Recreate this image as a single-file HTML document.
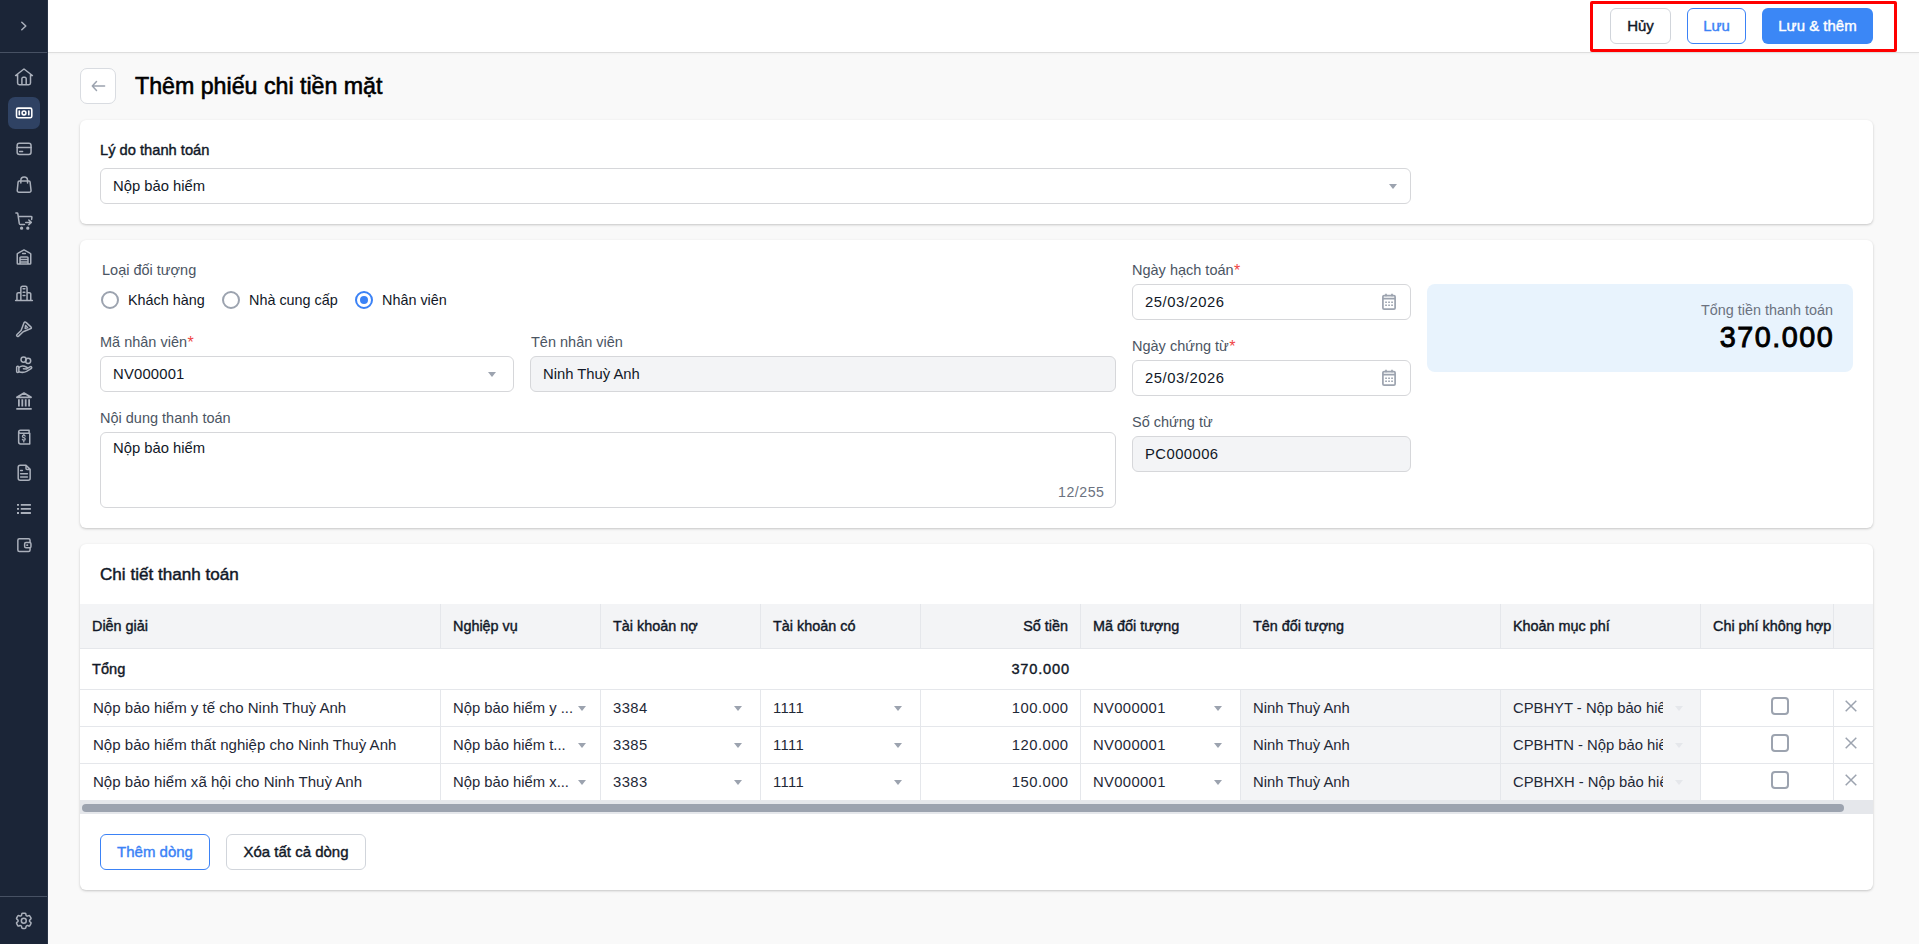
<!DOCTYPE html>
<html lang="vi">
<head>
<meta charset="utf-8">
<title>Thêm phiếu chi tiền mặt</title>
<style>
*{box-sizing:border-box;margin:0;padding:0}
html,body{width:1919px;height:944px;overflow:hidden;background:#f9f9f9;font-family:"Liberation Sans",sans-serif;color:#111827}
.abs{position:absolute}
#side{position:absolute;left:0;top:0;width:48px;height:944px;background:#1b2537;border-right:1px solid #2a3547}
#side .sep{position:absolute;left:0;width:47px;height:1px;background:#475163}
#side svg{position:absolute;left:12px;width:24px;height:24px;fill:none;stroke:#aab0bb;stroke-width:1.5;stroke-linecap:round;stroke-linejoin:round}
#side .act{position:absolute;left:8px;top:97px;width:32px;height:32px;border-radius:7px;background:#2f4263}
#hdr{position:absolute;left:48px;top:0;width:1871px;height:53px;background:#fff;border-bottom:1px solid #dedede;box-shadow:0 1px 2px rgba(0,0,0,.03)}
.btn{position:absolute;height:36px;border-radius:6px;font-weight:normal;font-size:15px;-webkit-text-stroke:.4px currentColor;display:flex;align-items:center;justify-content:center;background:#fff;padding-bottom:2px}
.card{position:absolute;left:80px;width:1793px;background:#fff;border-radius:6px;box-shadow:0 1px 3px rgba(0,0,0,.16),0 1px 2px rgba(0,0,0,.06)}
.lbl{position:absolute;font-size:14.5px;color:#4b5563;line-height:16px;white-space:nowrap}
.lbl b{color:#ef4444;font-weight:normal;font-size:16px;margin-left:.5px;position:relative;top:.5px}
.inp{position:absolute;height:36px;border:1px solid #d6d7da;border-radius:6px;background:#fff;font-size:14.8px;color:#111827;display:flex;align-items:center;padding-left:12px;white-space:nowrap}
.inp.dis{background:#f3f4f6}
.caret{position:absolute;width:0;height:0;border-left:4px solid transparent;border-right:4px solid transparent;border-top:5px solid #9ca3af}
.radio{position:absolute;width:18px;height:18px;border-radius:50%;border:2px solid #9ca3af;background:#fff}
.radio.on{border-color:#3b82f6}
.radio.on:after{content:"";position:absolute;left:3px;top:3px;width:8px;height:8px;border-radius:50%;background:#3b82f6}
.rtxt{position:absolute;font-size:14.4px;line-height:16px;color:#111827;white-space:nowrap}
svg.cal{position:absolute;width:14px;height:17px;fill:none;stroke:#9ca3af;stroke-width:1.7}
svg.cal .dots{stroke-width:1.6;stroke-linecap:square}
#tbl{position:absolute;left:80px;top:604px;width:1793px;height:210px;overflow:hidden}
.tr{display:flex;height:37px;border-bottom:1px solid #e5e7eb;position:relative}
.tr.th{height:45px;background:#f3f4f6}
.tr.tong{height:41px}
.row .td:first-child{padding-left:13px;font-size:15.05px;padding-bottom:2px}
.td{position:relative;flex:none;height:100%;border-left:1px solid #e5e7eb;padding:0 12px;display:flex;align-items:center;font-size:14.8px;color:#1f2937;white-space:nowrap;overflow:hidden}
.td:first-child{border-left:none}
.th .td{font-size:14.4px;-webkit-text-stroke:.4px currentColor;color:#111827}
.tong .td{font-size:14.6px;-webkit-text-stroke:.4px currentColor;color:#111827}
.td.nb{border-left-color:transparent}
.td.r{justify-content:flex-end}
.td.g{background:#f3f4f6}
.td .caret{top:16px}
.td .caret.lt{border-top-color:#e5e7eb}
.tx2{display:block;width:150px;overflow:hidden}
.cb{position:absolute;left:70px;top:7px;width:18px;height:18px;border:2px solid #9ca3af;border-radius:4px}
svg.x{position:absolute;left:11px;top:10px;width:12px;height:12px;stroke:#9ca3af;stroke-width:1.5;fill:none}
#track{position:absolute;left:0;top:196px;width:1793px;height:14px;background:#e5e7eb}
#thumb{position:absolute;left:2px;top:4px;width:1762px;height:8px;border-radius:4px;background:#9ca3af}
</style>
</head>
<body>
<!-- SIDEBAR -->
<div id="side">
  <div class="sep" style="top:52px"></div>
  <div class="act"></div>
  <div class="sep" style="top:896px"></div>
  <svg style="top:14px" viewBox="0 0 24 24"><path d="M9.8 8.2L13.8 12L9.8 15.8"/></svg>
  <svg style="top:64.5px" viewBox="0 0 24 24"><path d="M5.6 10.5H3.6L12 4L20.4 10.5H18.5M5.6 9.2V18.1a1.7 1.7 0 0 0 1.7 1.7H16.8a1.7 1.7 0 0 0 1.7-1.7V9.2M9.9 19.8V13.6a1.3 1.3 0 0 1 1.3-1.3h1.7a1.3 1.3 0 0 1 1.3 1.3V19.8"/></svg>
  <svg style="top:101px" viewBox="0 0 24 24"><g style="stroke:#fff;stroke-width:1.55"><rect x="4.5" y="7.1" width="15.3" height="9.7" rx="1.6"/><path d="M7.3 10.1V13.8M16.8 10.1V13.8"/><circle cx="12" cy="11.95" r="1.9"/></g></svg>
  <svg style="top:137px" viewBox="0 0 24 24"><rect x="5.15" y="6.35" width="13.9" height="11.2" rx="2.2"/><path d="M5.15 10.5H19.05M7.6 14.5H10.6"/></svg>
  <svg style="top:173px" viewBox="0 0 24 24"><path d="M8.85 9.9V7.4a3.35 3.35 0 0 1 6.7 0V9.9"/><path d="M7.3 7.95H16.9a1.2 1.2 0 0 1 1.2 1.1L19.05 17.5a1.7 1.7 0 0 1-1.7 1.75H6.95a1.7 1.7 0 0 1-1.7-1.75L6.1 9.05a1.2 1.2 0 0 1 1.2-1.1Z"/></svg>
  <svg style="top:209px" viewBox="0 0 24 24"><path d="M3.9 3.9h1.1a0.8 0.8 0 0 1 0.8 0.7L7.3 14.7a1 1 0 0 0 1 0.8H12.5M6.7 7.5H19.3a0.6 0.6 0 0 1 0.6 0.7L19.6 10.4M13.7 13.4H19.3M16.8 11L19.3 13.4L16.8 15.8"/><circle cx="9.6" cy="19.2" r="0.9" style="fill:#aab0bb"/><circle cx="15.8" cy="19.2" r="0.9" style="fill:#aab0bb"/></svg>
  <svg style="top:245px" viewBox="0 0 24 24"><path d="M5.25 18.2V9a0.8 0.8 0 0 1 0.45-0.7L12 4.9L18.3 8.3a0.8 0.8 0 0 1 0.45 0.7V18.2a0.8 0.8 0 0 1-0.8 0.8H6.05a0.8 0.8 0 0 1-0.8-0.8ZM10.6 8.5H13.4M8 19V13a0.9 0.9 0 0 1 0.9-0.9H15.1a0.9 0.9 0 0 1 0.9 0.9V19M8 14.6H16M8 16.9H16"/></svg>
  <svg style="top:281px" viewBox="0 0 24 24"><path d="M3.6 19.6H20.4M8.85 19.6V6.9a1.7 1.7 0 0 1 1.7-1.7h2.8a1.7 1.7 0 0 1 1.7 1.7V19.6M4.95 19.6V13.1a1.4 1.4 0 0 1 1.4-1.4H8.85M15.05 11.7h2.3a1.4 1.4 0 0 1 1.4 1.4V19.6M11.1 7.8h1.8M11.1 11.2h1.8M11.1 14.5h1.8"/></svg>
  <svg style="top:317px" viewBox="0 0 24 24"><path d="M11.9 5.9Q12.9 4.4 14.3 5.6L19.1 10.1Q19.8 11 18.9 11.5L11.2 14.7L6.6 19.1Q5.6 19.9 4.9 19.1Q4.2 18.3 5 17.5L9.1 13.5Z"/><path d="M13.5 8.3L15.7 10.7L13.1 11.6Z" style="stroke-width:1.3"/></svg>
  <svg style="top:353px" viewBox="0 0 24 24"><circle cx="11.6" cy="6.6" r="2.6"/><circle cx="16.1" cy="7.8" r="2.6"/><rect x="4.65" y="13.25" width="2.2" height="6.3" rx="1"/><path d="M6.9 14.5C8.4 13.2 10.8 12.6 12.6 13.3L14.7 14.2a0.9 0.9 0 0 1-0.5 1.7L11.4 15.7M6.9 18.7C9.4 19.6 12.4 19.5 14.6 18.4L19.5 15.3a1 1 0 0 0-1.1-1.6L15 15.6"/></svg>
  <svg style="top:389px" viewBox="0 0 24 24"><path d="M4.9 8.3L12 4.1L19.1 8.3Z" style="stroke-width:1.7"/><path d="M6.9 10.3V17.5M10.3 10.3V17.5M13.7 10.3V17.5M17.1 10.3V17.5M4.3 19.8H19.7" style="stroke-width:1.8;stroke-linecap:butt"/></svg>
  <svg style="top:425px" viewBox="0 0 24 24"><path d="M6.65 7a1.85 1.85 0 0 1 1.85-1.85H17.1V8.2M6.65 7V17.1a1.85 1.85 0 0 0 1.85 1.85H17.75V8.2H8.5a1.85 1.85 0 0 1-1.85-1.2"/><path d="M13.1 11.1c-0.2-0.6-0.7-0.9-1.3-0.9c-0.8 0-1.4 0.5-1.4 1.2c0 1.6 2.8 1 2.8 2.6c0 0.7-0.6 1.2-1.4 1.2c-0.6 0-1.2-0.3-1.4-0.9M11.8 9.3v0.9M11.8 16v0.9" style="stroke-width:1.3"/></svg>
  <svg style="top:461px" viewBox="0 0 24 24"><path d="M14 4.25H8.2a2 2 0 0 0-2 2V17.35a2 2 0 0 0 2 2H16.15a2 2 0 0 0 2-2V8.4ZM14 4.25V7.4a1 1 0 0 0 1 1H18.15M8.6 9.4H10.4M8.6 12.8H15.4M8.6 16.1H15.4"/></svg>
  <svg style="top:497px" viewBox="0 0 24 24"><path d="M5 7.9h2M5 11.9h2M5 15.95h2M8.8 7.9H18.9M8.8 11.9H18.9M8.8 15.95H18.9" style="stroke-width:1.9;stroke-linecap:butt"/></svg>
  <svg style="top:533px" viewBox="0 0 24 24"><path d="M18.05 9.55V7.35a1.5 1.5 0 0 0-1.5-1.5H7.35a1.5 1.5 0 0 0-1.5 1.5V16.95a1.5 1.5 0 0 0 1.5 1.5h9.2a1.5 1.5 0 0 0 1.5-1.5V14.75"/><rect x="12.65" y="9.55" width="6.3" height="5.2" rx="1.3"/><path d="M15.1 12.15h0.2" style="stroke-width:1.9"/></svg>
  <svg style="top:909px" viewBox="0 0 24 24"><g transform="translate(11.8 11.8) scale(0.845) translate(-12 -12)" style="stroke-width:1.8"><path d="M9.594 3.94c.09-.542.56-.94 1.11-.94h2.593c.55 0 1.02.398 1.11.94l.213 1.281c.063.374.313.686.645.87.074.04.147.083.22.127.325.196.72.257 1.075.124l1.217-.456a1.125 1.125 0 0 1 1.37.49l1.296 2.247a1.125 1.125 0 0 1-.26 1.431l-1.003.827c-.293.241-.438.613-.43.992a7.723 7.723 0 0 1 0 .255c-.008.378.137.75.43.991l1.004.827c.424.35.534.955.26 1.43l-1.298 2.247a1.125 1.125 0 0 1-1.369.491l-1.217-.456c-.355-.133-.75-.072-1.076.124a6.47 6.47 0 0 1-.22.128c-.331.183-.581.495-.644.869l-.213 1.281c-.09.543-.56.94-1.11.94h-2.594c-.55 0-1.019-.398-1.11-.94l-.213-1.281c-.062-.374-.312-.686-.644-.87a6.52 6.52 0 0 1-.22-.127c-.325-.196-.72-.257-1.076-.124l-1.217.456a1.125 1.125 0 0 1-1.369-.49l-1.297-2.247a1.125 1.125 0 0 1 .26-1.431l1.004-.827c.292-.24.437-.613.43-.991a6.932 6.932 0 0 1 0-.255c.007-.38-.138-.751-.43-.992l-1.004-.827a1.125 1.125 0 0 1-.26-1.43l1.297-2.247a1.125 1.125 0 0 1 1.37-.491l1.216.456c.356.133.751.072 1.076-.124.072-.044.146-.086.22-.128.332-.183.582-.495.644-.869l.214-1.28Z"/><circle cx="12" cy="12" r="2.9"/></g></svg>
</div>

<!-- HEADER -->
<div id="hdr"></div>
<div class="btn" style="left:1610px;top:8px;width:61px;border:1px solid #d1d5db;color:#111827">Hủy</div>
<div class="btn" style="left:1687px;top:8px;width:59px;border:1px solid #3b82f6;color:#3b82f6">Lưu</div>
<div class="btn" style="left:1762px;top:8px;width:111px;background:#3b87f6;color:#fff">Lưu &amp; thêm</div>
<div class="abs" style="left:1590px;top:1px;width:307px;height:51px;border:3px solid #ff0000;border-radius:2px"></div>

<!-- TITLE -->
<div class="abs" style="left:80px;top:68px;width:36px;height:36px;border:1px solid #d9dce1;border-radius:7px;background:#fff"></div>
<svg class="abs" style="left:86px;top:74px;width:24px;height:24px" viewBox="0 0 24 24" fill="none" stroke="#9ca3af" stroke-width="1.5" stroke-linecap="round" stroke-linejoin="round"><path d="M6.3 12H18.6M10.5 7.6L6.3 12L10.5 16.4"/></svg>
<div class="abs" style="left:135px;top:72px;font-size:23.2px;-webkit-text-stroke:.6px currentColor;line-height:28px;color:#000;white-space:nowrap">Thêm phiếu chi tiền mặt</div>

<!-- CARD 1 -->
<div class="card" style="top:120px;height:104px"></div>
<div class="abs" style="left:100px;top:142px;font-size:14.7px;-webkit-text-stroke:.4px currentColor;line-height:16px;color:#111827;white-space:nowrap">Lý do thanh toán</div>
<div class="inp" style="left:100px;top:168px;width:1311px">Nộp bảo hiểm</div>
<div class="caret" style="left:1389px;top:184px"></div>

<!-- CARD 2 -->
<div class="card" style="top:240px;height:288px"></div>
<div class="lbl" style="left:102px;top:262px">Loại đối tượng</div>
<div class="radio" style="left:101px;top:291px"></div>
<div class="rtxt" style="left:128px;top:292px">Khách hàng</div>
<div class="radio" style="left:222px;top:291px"></div>
<div class="rtxt" style="left:249px;top:292px">Nhà cung cấp</div>
<div class="radio on" style="left:355px;top:291px"></div>
<div class="rtxt" style="left:382px;top:292px">Nhân viên</div>

<div class="lbl" style="left:100px;top:334px">Mã nhân viên<b>*</b></div>
<div class="inp" style="left:100px;top:356px;width:414px;letter-spacing:.2px">NV000001</div>
<div class="caret" style="left:488px;top:372px"></div>
<div class="lbl" style="left:531px;top:334px">Tên nhân viên</div>
<div class="inp dis" style="left:530px;top:356px;width:586px">Ninh Thuỳ Anh</div>

<div class="lbl" style="left:100px;top:410px">Nội dung thanh toán</div>
<div class="inp" style="left:100px;top:432px;width:1016px;height:76px;align-items:flex-start;padding-top:6.5px">Nộp bảo hiểm</div>
<div class="abs" style="left:1040px;top:484px;width:64.5px;text-align:right;font-size:14.2px;letter-spacing:.5px;color:#6b7280;line-height:16px">12/255</div>

<div class="lbl" style="left:1132px;top:262px">Ngày hạch toán<b>*</b></div>
<div class="inp" style="left:1132px;top:284px;width:279px;letter-spacing:.55px">25/03/2026</div>
<div class="lbl" style="left:1132px;top:338px">Ngày chứng từ<b>*</b></div>
<div class="inp" style="left:1132px;top:360px;width:279px;letter-spacing:.55px">25/03/2026</div>
<div class="lbl" style="left:1132px;top:414px">Số chứng từ</div>
<div class="inp dis" style="left:1132px;top:436px;width:279px;letter-spacing:.45px">PC000006</div>
<svg class="cal" style="left:1382px;top:293px" viewBox="0 0 14 17"><rect x="0.9" y="2.6" width="12.2" height="13.5" rx="1.2"/><path d="M1 5.6h12M4 0.8v2.5M10 0.8v2.5"/><path class="dots" d="M4 9.2h0.1M7 9.2h0.1M10 9.2h0.1M4 12.3h0.1M7 12.3h0.1M10 12.3h0.1"/></svg>
<svg class="cal" style="left:1382px;top:369px" viewBox="0 0 14 17"><rect x="0.9" y="2.6" width="12.2" height="13.5" rx="1.2"/><path d="M1 5.6h12M4 0.8v2.5M10 0.8v2.5"/><path class="dots" d="M4 9.2h0.1M7 9.2h0.1M10 9.2h0.1M4 12.3h0.1M7 12.3h0.1M10 12.3h0.1"/></svg>

<div class="abs" style="left:1427px;top:284px;width:426px;height:88px;border-radius:8px;background:#e8f3fd"></div>
<div class="abs" style="left:1600px;top:301px;width:233px;text-align:right;font-size:14.4px;color:#6b7280;line-height:18px;white-space:nowrap">Tổng tiền thanh toán</div>
<div class="abs" style="left:1600px;top:320px;width:234.4px;text-align:right;font-size:28.8px;letter-spacing:1.5px;-webkit-text-stroke:.9px #000;color:#000;line-height:34px;white-space:nowrap">370.000</div>

<!-- CARD 3 -->
<div class="card" style="top:544px;height:346px"></div>
<div class="abs" style="left:100px;top:566px;font-size:17.1px;-webkit-text-stroke:.45px currentColor;line-height:18px;color:#111827;white-space:nowrap">Chi tiết thanh toán</div>
<div id="tbl">
<div class="tr th">
<div class="td" style="width:360px">Diễn giải</div>
<div class="td" style="width:160px">Nghiệp vụ</div>
<div class="td" style="width:160px">Tài khoản nợ</div>
<div class="td" style="width:160px">Tài khoản có</div>
<div class="td r" style="width:160px">Số tiền</div>
<div class="td" style="width:160px">Mã đối tượng</div>
<div class="td" style="width:260px">Tên đối tượng</div>
<div class="td" style="width:200px">Khoản mục phí</div>
<div class="td" style="width:133px">Chi phí không hợp</div>
<div class="td" style="width:40px"></div>
</div>
<div class="tr tong">
<div class="td" style="width:360px">Tổng</div><div class="td nb" style="width:160px"></div><div class="td nb" style="width:160px"></div><div class="td nb" style="width:160px"></div><div class="td nb r" style="width:160px;letter-spacing:.8px;padding-right:10.2px">370.000</div><div class="td nb" style="width:160px"></div><div class="td nb" style="width:160px"></div><div class="td nb" style="width:260px"></div><div class="td nb" style="width:200px"></div><div class="td nb" style="width:133px"></div><div class="td" style="width:40px"></div>
</div>
<div class="tr row">
<div class="td" style="width:360px">Nộp bảo hiểm y tế cho Ninh Thuỳ Anh</div>
<div class="td sel" style="width:160px"><span class="tx">Nộp bảo hiểm y ...</span><i class="caret" style="left:137px"></i></div>
<div class="td sel" style="width:160px;letter-spacing:.4px">3384<i class="caret" style="left:133px"></i></div>
<div class="td sel" style="width:160px;letter-spacing:.4px">1111<i class="caret" style="left:133px"></i></div>
<div class="td r" style="width:160px;letter-spacing:.45px;padding-right:11.5px">100.000</div>
<div class="td sel" style="width:160px;letter-spacing:.35px">NV000001<i class="caret" style="left:133px"></i></div>
<div class="td g" style="width:260px">Ninh Thuỳ Anh</div>
<div class="td g sel" style="width:200px"><span class="tx2">CPBHYT - Nộp bảo hiểm y tế</span><i class="caret lt" style="left:174px"></i></div>
<div class="td" style="width:133px"><i class="cb"></i></div>
<div class="td" style="width:40px"><svg class="x" viewBox="0 0 12 12"><path d="M0.7 0.7l10.6 10.6M11.3 0.7L0.7 11.3"/></svg></div>
</div>
<div class="tr row">
<div class="td" style="width:360px">Nộp bảo hiểm thất nghiệp cho Ninh Thuỳ Anh</div>
<div class="td sel" style="width:160px"><span class="tx">Nộp bảo hiểm t...</span><i class="caret" style="left:137px"></i></div>
<div class="td sel" style="width:160px;letter-spacing:.4px">3385<i class="caret" style="left:133px"></i></div>
<div class="td sel" style="width:160px;letter-spacing:.4px">1111<i class="caret" style="left:133px"></i></div>
<div class="td r" style="width:160px;letter-spacing:.45px;padding-right:11.5px">120.000</div>
<div class="td sel" style="width:160px;letter-spacing:.35px">NV000001<i class="caret" style="left:133px"></i></div>
<div class="td g" style="width:260px">Ninh Thuỳ Anh</div>
<div class="td g sel" style="width:200px"><span class="tx2">CPBHTN - Nộp bảo hiểm thất nghiệp</span><i class="caret lt" style="left:174px"></i></div>
<div class="td" style="width:133px"><i class="cb"></i></div>
<div class="td" style="width:40px"><svg class="x" viewBox="0 0 12 12"><path d="M0.7 0.7l10.6 10.6M11.3 0.7L0.7 11.3"/></svg></div>
</div>
<div class="tr row">
<div class="td" style="width:360px">Nộp bảo hiểm xã hội cho Ninh Thuỳ Anh</div>
<div class="td sel" style="width:160px"><span class="tx">Nộp bảo hiểm x...</span><i class="caret" style="left:137px"></i></div>
<div class="td sel" style="width:160px;letter-spacing:.4px">3383<i class="caret" style="left:133px"></i></div>
<div class="td sel" style="width:160px;letter-spacing:.4px">1111<i class="caret" style="left:133px"></i></div>
<div class="td r" style="width:160px;letter-spacing:.45px;padding-right:11.5px">150.000</div>
<div class="td sel" style="width:160px;letter-spacing:.35px">NV000001<i class="caret" style="left:133px"></i></div>
<div class="td g" style="width:260px">Ninh Thuỳ Anh</div>
<div class="td g sel" style="width:200px"><span class="tx2">CPBHXH - Nộp bảo hiểm xã hội</span><i class="caret lt" style="left:174px"></i></div>
<div class="td" style="width:133px"><i class="cb"></i></div>
<div class="td" style="width:40px"><svg class="x" viewBox="0 0 12 12"><path d="M0.7 0.7l10.6 10.6M11.3 0.7L0.7 11.3"/></svg></div>
</div>
<div id="track"><div id="thumb"></div></div>
</div>
<div class="btn" style="left:100px;top:834px;width:110px;border:1px solid #3b82f6;color:#3b82f6">Thêm dòng</div>
<div class="btn" style="left:226px;top:834px;width:140px;border:1px solid #d1d5db;color:#111827">Xóa tất cả dòng</div>

</body>
</html>
